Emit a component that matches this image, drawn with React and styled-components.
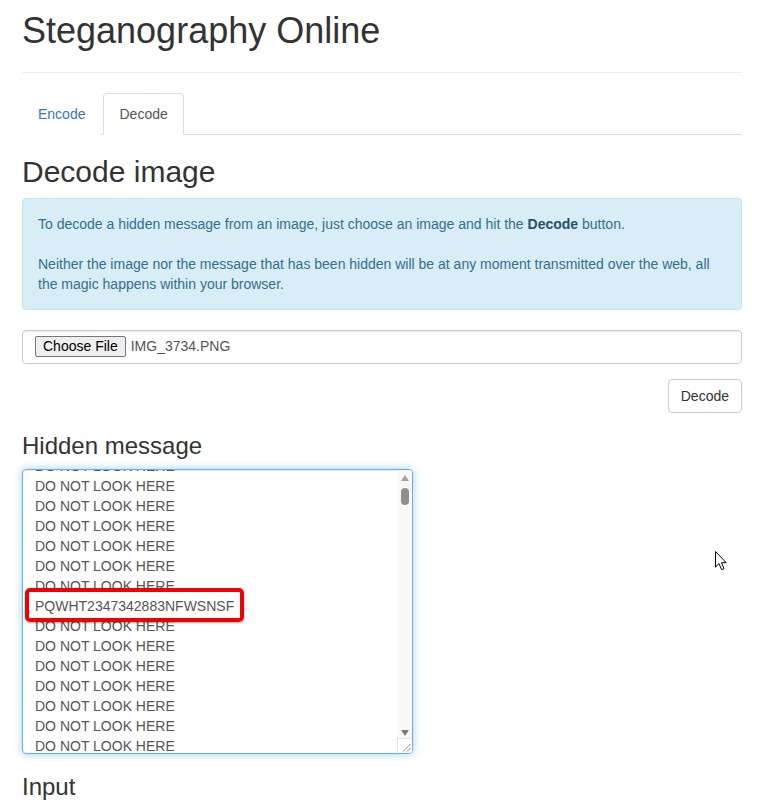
import React, { useLayoutEffect, useRef } from 'react';
import styled, { createGlobalStyle } from 'styled-components';

const GlobalStyle = createGlobalStyle`
  html, body { margin: 0; padding: 0; background: #fff; }
  body {
    font-family: "Liberation Sans", Arial, Helvetica, sans-serif;
    font-size: 14px;
    line-height: 1.42857;
    color: #333;
  }
  * { box-sizing: border-box; }
`;

const Page = styled.div`
  position: relative;
  padding: 0 22px;
  min-height: 803px;
  overflow: hidden;
`;

const PageHeader = styled.div`
  padding-bottom: 11px;
  margin-bottom: 20px;
  border-bottom: 1px solid #eee;
`;

const Title = styled.h1`
  margin: 11px 0 10px;
  font-size: 36px;
  line-height: 40px;
  font-weight: 500;
  color: #333;
`;

const Tabs = styled.ul`
  display: flex;
  list-style: none;
  margin: 0;
  padding: 0;
  border-bottom: 1px solid #ddd;
`;

const TabItem = styled.li`
  margin-bottom: -1px;
  margin-right: 2px;
`;

const TabLink = styled.a`
  display: block;
  padding: 10px 15px;
  line-height: 20px;
  border: 1px solid ${p => (p.$active ? '#ddd' : 'transparent')};
  border-bottom-color: transparent;
  border-radius: 4px 4px 0 0;
  background: #fff;
  color: ${p => (p.$active ? '#555' : '#337ab7')};
  text-decoration: none;
`;

const SectionTitle = styled.h2`
  margin: 20px 0 10px;
  font-size: 30px;
  line-height: 33px;
  font-weight: 500;
`;

const Alert = styled.div`
  padding: 15px;
  margin-bottom: 20px;
  border: 1px solid #bce8f1;
  border-radius: 4px;
  background: #d9edf7;
  color: #31708f;
  line-height: 20px;
  p { margin: 0; }
  b { font-weight: 700; color: #245269; }
`;

const FileControl = styled.div`
  display: flex;
  align-items: center;
  height: 34px;
  padding: 5px 12px 6px;
  border: 1px solid #ccc;
  border-radius: 4px;
  box-shadow: inset 0 1px 1px rgba(0, 0, 0, 0.075);
  background: #fff;
`;

const ChooseButton = styled.button`
  height: 21px;
  padding: 0 7px;
  margin: 0 5px 0 0;
  border: 1px solid #767676;
  border-radius: 2px;
  background: #efefef;
  color: #000;
  font-family: inherit;
  font-size: 14px;
  line-height: 19px;
`;

const FileName = styled.span`
  color: #555;
  font-size: 14px;
`;

const ActionRow = styled.div`
  display: flex;
  justify-content: flex-end;
  margin-top: 15px;
`;

const Button = styled.button`
  height: 34px;
  padding: 6px 12px;
  border: 1px solid #ccc;
  border-radius: 4px;
  background: #fff;
  color: #333;
  font-family: inherit;
  font-size: 14px;
  line-height: 20px;
`;

const SubTitle = styled.h3`
  margin: 20px 0 10px;
  font-size: 24px;
  line-height: 26.4px;
  font-weight: 500;
`;

const TextWrap = styled.div`
  position: relative;
  width: 391px;
  height: 285px;
`;

const MessageArea = styled.textarea`
  display: block;
  width: 391px;
  height: 285px;
  padding: 6px 12px;
  border: 1px solid #66afe9;
  border-radius: 4px;
  outline: 0;
  box-shadow: inset 0 1px 1px rgba(0, 0, 0, 0.075), 0 0 8px rgba(102, 175, 233, 0.6);
  font-family: "Liberation Sans", Arial, sans-serif;
  font-size: 14px;
  line-height: 20px;
  color: #555;
  resize: none;
  overflow-y: scroll;
  scrollbar-width: none;
  &::-webkit-scrollbar { display: none; }
`;

const ScrollTrack = styled.div`
  position: absolute;
  top: 1px;
  right: 1px;
  bottom: 16px;
  width: 15px;
  display: flex;
  flex-direction: column;
  align-items: center;
  padding: 5px 0 2px;
  background: #f8f8f8;
  border-top-right-radius: 3px;
`;

const Arrow = styled.div`
  width: 0;
  height: 0;
  border-left: 4.5px solid transparent;
  border-right: 4.5px solid transparent;
  ${p =>
    p.$dir === 'up'
      ? `border-bottom: 6px solid #a3a3a3;`
      : `border-top: 6px solid #7a7a7a;`}
`;

const Thumb = styled.div`
  margin-top: 7px;
  width: 8px;
  height: 17px;
  border-radius: 4px;
  background: #8f8f8f;
`;

const TrackSpace = styled.div`
  flex: 1;
`;

const Resizer = styled.div`
  position: absolute;
  right: 1px;
  bottom: 1px;
  width: 15px;
  height: 15px;
  background: #fff;
  border-top: 1px solid #e4e4e4;
  border-left: 1px solid #e4e4e4;
  border-bottom-right-radius: 3px;
  svg { display: block; }
`;

const Highlight = styled.div`
  position: absolute;
  left: 3px;
  top: 119px;
  width: 219px;
  height: 34px;
  border: 4px solid #f20000;
  border-radius: 5px;
  box-shadow: 0 1px 2px rgba(0, 0, 0, 0.35);
  pointer-events: none;
`;

const Cursor = styled.svg`
  position: absolute;
  left: 714px;
  top: 550px;
`;

const LINES = [
  ...Array(11).fill('DO NOT LOOK HERE'),
  'PQWHT2347342883NFWSNSF',
  ...Array(30).fill('DO NOT LOOK HERE'),
].join('\n');

export default function App() {
  const areaRef = useRef(null);
  useLayoutEffect(() => {
    if (areaRef.current) areaRef.current.scrollTop = 100;
  }, []);

  return (
    <>
      <GlobalStyle />
      <Page>
        <PageHeader>
          <Title>Steganography Online</Title>
        </PageHeader>

        <Tabs>
          <TabItem>
            <TabLink href="#encode">Encode</TabLink>
          </TabItem>
          <TabItem>
            <TabLink $active href="#decode">Decode</TabLink>
          </TabItem>
        </Tabs>

        <SectionTitle>Decode image</SectionTitle>
        <Alert>
          <p>
            To decode a hidden message from an image, just choose an image and hit the <b>Decode</b> button.
          </p>
          <br />
          <p>
            Neither the image nor the message that has been hidden will be at any moment transmitted over the web, all
            the magic happens within your browser.
          </p>
        </Alert>

        <FileControl>
          <ChooseButton type="button">Choose File</ChooseButton>
          <FileName>IMG_3734.PNG</FileName>
        </FileControl>

        <ActionRow>
          <Button type="button">Decode</Button>
        </ActionRow>

        <SubTitle>Hidden message</SubTitle>
        <TextWrap>
          <MessageArea ref={areaRef} readOnly value={LINES} />
          <ScrollTrack>
            <Arrow $dir="up" />
            <Thumb />
            <TrackSpace />
            <Arrow $dir="down" />
          </ScrollTrack>
          <Resizer>
            <svg width="14" height="14" viewBox="0 0 14 14">
              <line x1="12.5" y1="5" x2="5" y2="12.5" stroke="#8a8a8a" strokeWidth="1" />
              <line x1="12.5" y1="9" x2="9" y2="12.5" stroke="#8a8a8a" strokeWidth="1" />
            </svg>
          </Resizer>
          <Highlight />
        </TextWrap>

        <SubTitle>Input</SubTitle>

        <Cursor width="14" height="22" viewBox="0 0 14 22">
          <path
            d="M1.5 1.5 L1.5 17 L5 13.6 L7.6 19.6 L10 18.6 L7.5 12.7 L12.2 12.7 Z"
            fill="#fff"
            stroke="#000"
            strokeWidth="1"
            strokeLinejoin="miter"
          />
        </Cursor>
      </Page>
    </>
  );
}
